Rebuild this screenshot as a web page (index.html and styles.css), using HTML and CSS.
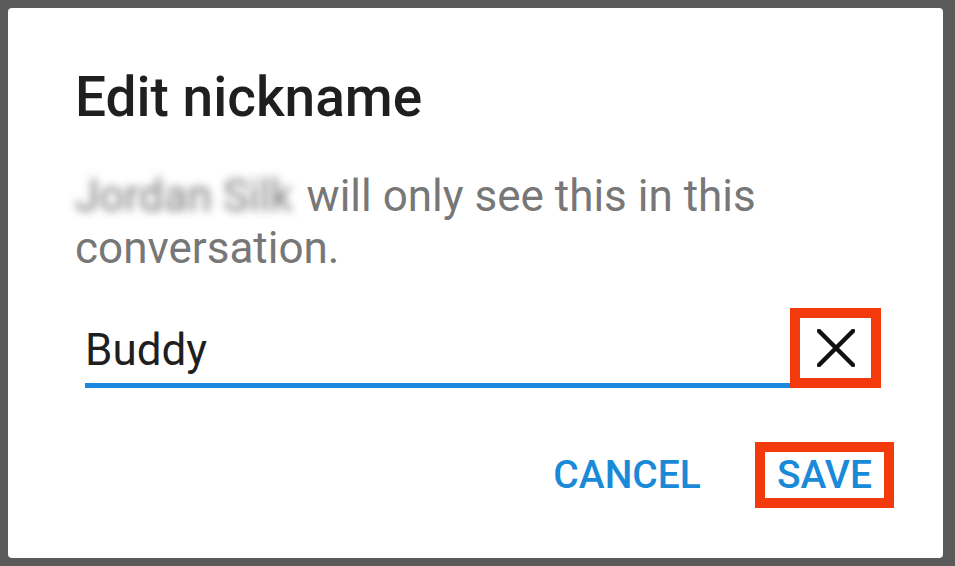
FILE: index.html
```html
<!DOCTYPE html>
<html>
<head>
<meta charset="utf-8">
<link rel="stylesheet" href="styles.css">
</head>
<body>
<div class="dialog">
  <h1 class="title">Edit nickname</h1>
  <p class="message"><span class="blur">Jordan Silk</span> will only see this in this conversation.</p>
  <div class="field-row">
    <div class="field"><span class="field-text">Buddy</span></div>
    <div class="clear-box">
      <svg class="x-icon" viewBox="0 0 38 38" width="38" height="38"><path d="M2 2 L36 36 M36 2 L2 36" stroke="#111" stroke-width="4.5" stroke-linecap="round" fill="none"/></svg>
    </div>
  </div>
  <div class="actions">
    <span class="btn cancel">CANCEL</span>
    <span class="btn save">SAVE</span>
  </div>
</div>
</body>
</html>
```
FILE: styles.css
```css
html, body {
  margin: 0;
  padding: 0;
}
body {
  background: #5a5a5a;
  width: 955px;
  height: 566px;
  overflow: hidden;
  font-family: Roboto, "Liberation Sans", sans-serif;
}
.dialog {
  margin: 8px 0 0 8px;
  width: 935px;
  height: 550px;
  background: #fff;
  border-radius: 4px;
  box-sizing: border-box;
  padding: 57px 0 0 67px;
}
.title {
  margin: 0;
  font-size: 55px;
  font-weight: 500;
  line-height: 64px;
  color: #1f1f1f;
}
.message {
  margin: 41px 0 0 0;
  width: 720px;
  font-size: 44px;
  line-height: 52px;
  color: #777777;
}
.blur {
  color: transparent;
  text-shadow: 0 0 9px rgba(110, 110, 110, 0.9);
  margin-right: 3px;
}
.field-row {
  display: flex;
  align-items: flex-end;
  margin: 34px 0 0 10px;
  width: 796px;
}
.field {
  flex: 1;
  border-bottom: 5px solid #1a88e0;
  height: 75px;
  box-sizing: border-box;
  display: flex;
  align-items: flex-end;
  padding-bottom: 3px;
}
.field-text {
  font-size: 44px;
  color: #1f1f1f;
  line-height: 60px;
}
.clear-box {
  width: 91px;
  height: 80px;
  box-sizing: border-box;
  border: 10px solid #f23a0c;
  display: flex;
  align-items: center;
  justify-content: center;
}
.actions {
  display: flex;
  justify-content: flex-end;
  align-items: center;
  margin-top: 54px;
  width: 819px;
  gap: 54px;
}
.btn {
  font-size: 39px;
  font-weight: 500;
  color: #1a8ad8;
  line-height: 46px;
}
.save {
  border: 10px solid #f23a0c;
  padding: 0 12px;
}
```
